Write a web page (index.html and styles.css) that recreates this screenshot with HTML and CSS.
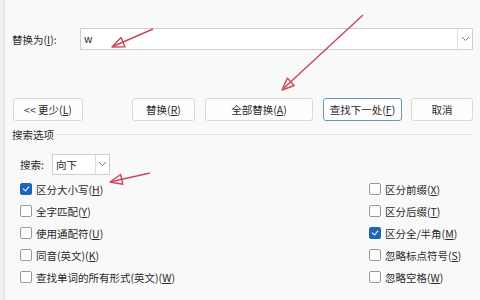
FILE: index.html
```html
<!DOCTYPE html>
<html lang="zh-CN">
<head>
    <meta charset="UTF-8">
    <title>查找和替换</title>
    <link rel="stylesheet" href="styles.css">
</head>
<body>
    <div class="frame">
        <div class="dialog">
            <div class="replace-row">
                <label class="replace-label">替换为(<u>I</u>):</label>
                <div class="combo">
                    <span class="combo-text">w</span>
                    <span class="combo-btn">
                        <svg width="9" height="6" viewBox="0 0 9 6"><path d="M1 1 L4.5 4.5 L8 1" fill="none" stroke="#777" stroke-width="1"/></svg>
                    </span>
                </div>
            </div>

            <div class="button-row">
                <button class="btn btn-less">&lt;&lt; 更少(<u>L</u>)</button>
                <button class="btn btn-replace">替换(<u>R</u>)</button>
                <button class="btn btn-all">全部替换(<u>A</u>)</button>
                <button class="btn btn-next">查找下一处(<u>F</u>)</button>
                <button class="btn btn-cancel">取消</button>
            </div>

            <div class="section-title">
                <span>搜索选项</span>
                <span class="section-line"></span>
            </div>

            <div class="search-row">
                <span class="search-label">搜索:</span>
                <div class="select">
                    <span class="select-text">向下</span>
                    <span class="select-btn">
                        <svg width="9" height="6" viewBox="0 0 9 6"><path d="M1 1 L4.5 4.5 L8 1" fill="none" stroke="#777" stroke-width="1"/></svg>
                    </span>
                </div>
            </div>

            <div class="options">
                <div class="col">
                    <div class="opt"><span class="box checked"></span>区分大小写(<u>H</u>)</div>
                    <div class="opt"><span class="box"></span>全字匹配(<u>Y</u>)</div>
                    <div class="opt"><span class="box"></span>使用通配符(<u>U</u>)</div>
                    <div class="opt"><span class="box"></span>同音(英文)(<u>K</u>)</div>
                    <div class="opt"><span class="box"></span>查找单词的所有形式(英文)(<u>W</u>)</div>
                </div>
                <div class="col">
                    <div class="opt"><span class="box"></span>区分前缀(<u>X</u>)</div>
                    <div class="opt"><span class="box"></span>区分后缀(<u>T</u>)</div>
                    <div class="opt"><span class="box checked"></span>区分全/半角(<u>M</u>)</div>
                    <div class="opt"><span class="box"></span>忽略标点符号(<u>S</u>)</div>
                    <div class="opt"><span class="box"></span>忽略空格(<u>W</u>)</div>
                </div>
            </div>
        </div>

        <!-- red annotation arrows drawn over the dialog -->
        <svg class="marks" width="480" height="300" viewBox="0 0 480 300">
            <g fill="none" stroke="#c8485a" stroke-width="1.4" stroke-linejoin="round">
                <line x1="153" y1="29" x2="114" y2="46"/>
                <polygon points="112,47 125,46.8 121,37.6"/>
                <line x1="363" y1="15" x2="284" y2="88"/>
                <polygon points="282,90 294.2,85.5 287.4,78.1"/>
                <line x1="150" y1="173" x2="112" y2="181.5"/>
                <polygon points="110,182 122.8,184.3 120.6,174.5"/>
            </g>
        </svg>
    </div>
</body>
</html>
```

FILE: styles.css
```css
body {
    margin: 0;
    background-color: #f0f0f0;
    font-family: "Noto Sans CJK SC", "Noto Sans", sans-serif;
    font-size: 10.5px;
    color: #2a2a2a;
}

.frame {
    position: relative;
    width: 480px;
    height: 300px;
    overflow: hidden;
}

.dialog {
    margin-left: 4px;
    height: 300px;
    border-left: 1px solid #e2e2e2;
    background-color: #f9f9f9;
    padding: 28px 7px 0 7px;
    box-sizing: border-box;
}

u {
    text-decoration: underline;
    text-underline-offset: 1px;
}

.replace-row {
    display: flex;
    align-items: center;
    height: 22px;
}

.replace-label {
    width: 68px;
}

.combo {
    flex: 1;
    display: flex;
    height: 22px;
    box-sizing: border-box;
    background-color: #fff;
    border: 1px solid #cfcfcf;
}

.combo-text {
    flex: 1;
    padding-left: 3px;
    line-height: 20px;
}

.combo-btn {
    width: 14px;
    border-left: 1px solid #dcdcdc;
    display: flex;
    align-items: center;
    justify-content: center;
}

.button-row {
    display: flex;
    margin-top: 48px;
    height: 23px;
}

.btn {
    height: 23px;
    padding: 0;
    font-family: inherit;
    font-size: 10.5px;
    color: #2a2a2a;
    background-color: #fdfdfd;
    border: 1px solid #d9d9d9;
    border-radius: 3px;
    margin-left: 10px;
}

.btn-less {
    width: 70px;
    margin-left: 1px;
}

.btn-replace {
    width: 63px;
    margin-left: 49px;
}

.btn-all {
    width: 108px;
}

.btn-next {
    width: 79px;
    border-color: #6a97ad;
}

.btn-cancel {
    width: 62px;
    margin-left: 9px;
}

.section-title {
    display: flex;
    align-items: center;
    margin-top: 5px;
    height: 17px;
}

.section-line {
    flex: 1;
    height: 1px;
    background-color: #e2e2e2;
    margin-left: 2px;
}

.search-row {
    display: flex;
    align-items: center;
    margin-top: 11px;
    padding-left: 8px;
    height: 20px;
}

.search-label {
    width: 32px;
}

.select {
    display: flex;
    width: 58px;
    height: 21px;
    box-sizing: border-box;
    background-color: #fff;
    border: 1px solid #cfcfcf;
}

.select-text {
    flex: 1;
    padding-left: 3px;
    line-height: 19px;
}

.select-btn {
    width: 13px;
    border-left: 1px solid #dcdcdc;
    display: flex;
    align-items: center;
    justify-content: center;
}

.options {
    display: flex;
    margin-top: 4px;
    padding-left: 8px;
}

.col {
    display: flex;
    flex-direction: column;
}

.col + .col {
    margin-left: auto;
    width: 104px;
}

.opt {
    display: flex;
    align-items: center;
    height: 22px;
}

.box {
    width: 10px;
    height: 10px;
    border: 1px solid #9a9a9a;
    border-radius: 2px;
    background-color: #fdfdfd;
    margin-right: 4px;
    position: relative;
}

.box.checked {
    background-color: #1c65b8;
    border-color: #1c65b8;
}

.box.checked::after {
    content: "";
    position: absolute;
    left: 3px;
    top: 1px;
    width: 3px;
    height: 5px;
    border-right: 1.2px solid #fff;
    border-bottom: 1.2px solid #fff;
    transform: rotate(40deg);
}

.marks {
    position: absolute;
    left: 0;
    top: 0;
    pointer-events: none;
}
```
